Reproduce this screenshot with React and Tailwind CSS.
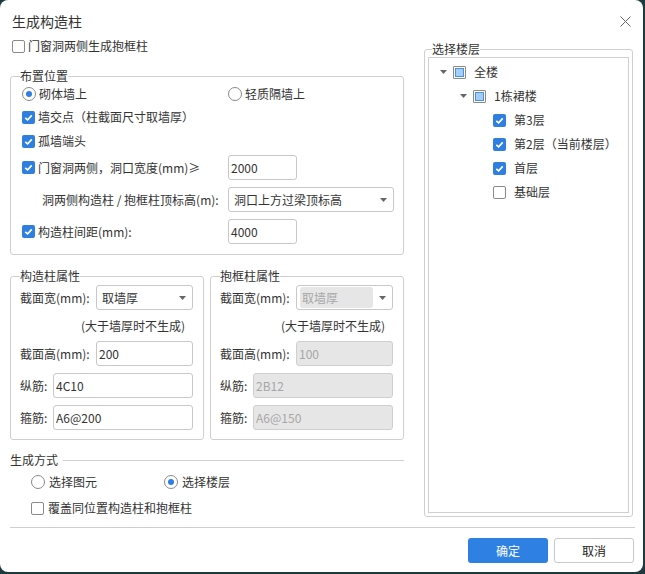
import React from "react";

const Check = ({ checked }) =>
  checked ? (
    <span className="w-[13px] h-[13px] rounded-[2px] bg-[#2f7fe0] flex items-center justify-center shrink-0">
      <svg width="9" height="9" viewBox="0 0 10 10">
        <path d="M1.4 5.3 L4 7.6 L8.6 2.6" stroke="white" strokeWidth="1.8" fill="none" />
      </svg>
    </span>
  ) : (
    <span className="w-[13px] h-[13px] rounded-[2px] border border-[#8a8a8a] bg-white shrink-0" />
  );

const Radio = ({ checked }) => (
  <span className="w-[14px] h-[14px] rounded-full border border-[#8a8a8a] bg-white flex items-center justify-center shrink-0">
    {checked && <span className="w-[6px] h-[6px] rounded-full bg-[#2f7fe0]" />}
  </span>
);

const Arrow = () => (
  <svg width="7" height="4" viewBox="0 0 7 4" className="shrink-0">
    <path d="M0 0 L7 0 L3.5 4 Z" fill="#666" />
  </svg>
);

const Input = ({ value, disabled, className = "" }) => (
  <div
    className={`h-[25px] border rounded-[3px] flex items-center pl-[2px] ${
      disabled ? "bg-[#e6e6e6] border-[#cfcfcf] text-[#a6a6a6]" : "bg-white border-[#c8c8c8]"
    } ${className}`}
  >
    {value}
  </div>
);

const Select = ({ value, disabled, className = "" }) => (
  <div className={`h-[25px] border border-[#c8c8c8] rounded-[3px] bg-white flex items-center pr-[6px] ${className}`}>
    {disabled ? (
      <div className="flex-1 h-[21px] ml-[3px] mr-[6px] rounded-[3px] bg-[#e6e6e6] text-[#a6a6a6] flex items-center pl-[2px]">
        {value}
      </div>
    ) : (
      <div className="flex-1 pl-[5px]">{value}</div>
    )}
    <Arrow />
  </div>
);

const Legend = ({ children, className = "" }) => (
  <legend className={`leading-[16px] px-0 ${className}`}>{children}</legend>
);

const PropsBox = ({ title, disabled, w, h, zj, gj }) => (
  <fieldset className="w-[194px] border border-[#cfcfcf] rounded-[3px] pl-[9px] pr-[10px] pb-[9px]">
    <Legend>{title}</Legend>
    <div className="mt-[1px] flex items-center">
      <span className="w-[76px]">截面宽(mm):</span>
      <Select value={w} disabled={disabled} className="flex-1" />
    </div>
    <div className="mt-[6px] h-[20px] flex items-center pl-[61px] whitespace-nowrap">(大于墙厚时不生成)</div>
    <div className="mt-[5px] flex items-center">
      <span className="w-[76px]">截面高(mm):</span>
      <Input value={h} disabled={disabled} className="flex-1" />
    </div>
    <div className="mt-[7px] flex items-center">
      <span className="w-[33px]">纵筋:</span>
      <Input value={zj} disabled={disabled} className="flex-1" />
    </div>
    <div className="mt-[7px] flex items-center">
      <span className="w-[33px]">箍筋:</span>
      <Input value={gj} disabled={disabled} className="flex-1" />
    </div>
  </fieldset>
);

const Partial = () => (
  <span className="w-[13px] h-[13px] border border-[#8a8a8a] rounded-[1px] p-[1px] bg-white shrink-0 flex">
    <span className="flex-1 bg-[#a3cdfa] border border-[#4a90e2]" />
  </span>
);

const App = () => {
  return (
    <div className="w-[645px] h-[574px] bg-[#1d3b3f] font-['Noto_Sans_CJK_SC',sans-serif] text-[12px] text-[#333] leading-[20px]">
      <div className="w-[643px] h-[572px] bg-white rounded-[8px] flex flex-col">

        {/* Title */}
        <div className="h-[36px] pt-[6px] pl-[12px] pr-[12px] flex items-center justify-between">
          <span className="text-[14px] text-[#333]">生成构造柱</span>
          <svg width="11" height="11" viewBox="0 0 11 11">
            <path d="M0.5 0.5 L10.5 10.5 M10.5 0.5 L0.5 10.5" stroke="#666" strokeWidth="1" />
          </svg>
        </div>

        {/* Body */}
        <div className="h-[491px] flex px-[10px] gap-[20px] items-start">
          {/* left */}
          <div className="w-[394px]">
            <div className="h-[20px] flex items-center gap-[3px] pl-[2px]">
              <Check />
              <span>门窗洞两侧生成抱框柱</span>
            </div>

            <fieldset className="mt-[12px] border border-[#cfcfcf] rounded-[3px] px-[9px] pb-[10px]">
              <Legend>布置位置</Legend>
              <div className="h-[20px] flex items-center">
                <div className="w-[208px] flex items-center gap-[3px] pl-[2px]">
                  <Radio checked />
                  <span>砌体墙上</span>
                </div>
                <div className="flex items-center gap-[3px]">
                  <Radio />
                  <span>轻质隔墙上</span>
                </div>
              </div>
              <div className="mt-[3px] h-[20px] flex items-center gap-[3px] pl-[2px]">
                <Check checked />
                <span>墙交点（柱截面尺寸取墙厚）</span>
              </div>
              <div className="mt-[4px] h-[20px] flex items-center gap-[3px] pl-[2px]">
                <Check checked />
                <span>孤墙端头</span>
              </div>
              <div className="mt-[4px] flex items-center">
                <div className="w-[208px] flex items-center gap-[3px] pl-[2px]">
                  <Check checked />
                  <span>门窗洞两侧，洞口宽度(mm)≥</span>
                </div>
                <Input value="2000" className="w-[69px]" />
              </div>
              <div className="mt-[7px] flex items-center">
                <div className="w-[208px] pl-[22px]">洞两侧构造柱 / 抱框柱顶标高(m):</div>
                <Select value="洞口上方过梁顶标高" className="flex-1" />
              </div>
              <div className="mt-[7px] flex items-center">
                <div className="w-[208px] flex items-center gap-[3px] pl-[2px]">
                  <Check checked />
                  <span>构造柱间距(mm):</span>
                </div>
                <Input value="4000" className="w-[69px]" />
              </div>
            </fieldset>

            <div className="mt-[13px] flex gap-[6px]">
              <PropsBox title="构造柱属性" w="取墙厚" h="200" zj="4C10" gj="A6@200" />
              <PropsBox title="抱框柱属性" disabled w="取墙厚" h="100" zj="2B12" gj="A6@150" />
            </div>

            <div className="mt-[10px] h-[20px] flex items-center gap-[5px]">
              <span>生成方式</span>
              <div className="flex-1 h-px bg-[#cfcfcf]" />
            </div>
            <div className="mt-[2px] h-[20px] flex items-center pl-[21px]">
              <div className="w-[133px] flex items-center gap-[4px]">
                <Radio />
                <span>选择图元</span>
              </div>
              <div className="flex items-center gap-[4px]">
                <Radio checked />
                <span>选择楼层</span>
              </div>
            </div>
            <div className="mt-[6px] h-[20px] flex items-center gap-[4px] pl-[21px]">
              <Check />
              <span>覆盖同位置构造柱和抱框柱</span>
            </div>
          </div>

          {/* right */}
          <fieldset className="w-[210px] mt-[5px] border border-[#cfcfcf] rounded-[3px] px-[3px] pb-[3px]">
            <Legend className="ml-[4px]">选择楼层</Legend>
            <div className="h-[456px] border border-[#d0d0d0] pt-[2px]">
              <div className="h-[24px] flex items-center pl-[11px]">
                <Arrow />
                <span className="ml-[6px]"><Partial /></span>
                <span className="ml-[8px]">全楼</span>
              </div>
              <div className="h-[24px] flex items-center pl-[31px]">
                <Arrow />
                <span className="ml-[6px]"><Partial /></span>
                <span className="ml-[8px]">1栋裙楼</span>
              </div>
              {[
                ["第3层", true],
                ["第2层（当前楼层）", true],
                ["首层", true],
                ["基础层", false],
              ].map(([t, c]) => (
                <div key={t} className="h-[24px] flex items-center pl-[64px] gap-[8px]">
                  <Check checked={c} />
                  <span>{t}</span>
                </div>
              ))}
            </div>
          </fieldset>
        </div>

        {/* Footer */}
        <div className="h-px bg-[#cfcfcf] ml-[10px] mr-[8px]" />
        <div className="mt-[10px] flex justify-end gap-[6px] pr-[9px]">
          <button className="w-[80px] h-[25px] rounded-[3px] bg-[#2e80e2] text-white">确定</button>
          <button className="w-[80px] h-[25px] rounded-[3px] border border-[#c8c8c8] bg-white text-[#222]">取消</button>
        </div>
      </div>
    </div>
  );
};

export default App;
